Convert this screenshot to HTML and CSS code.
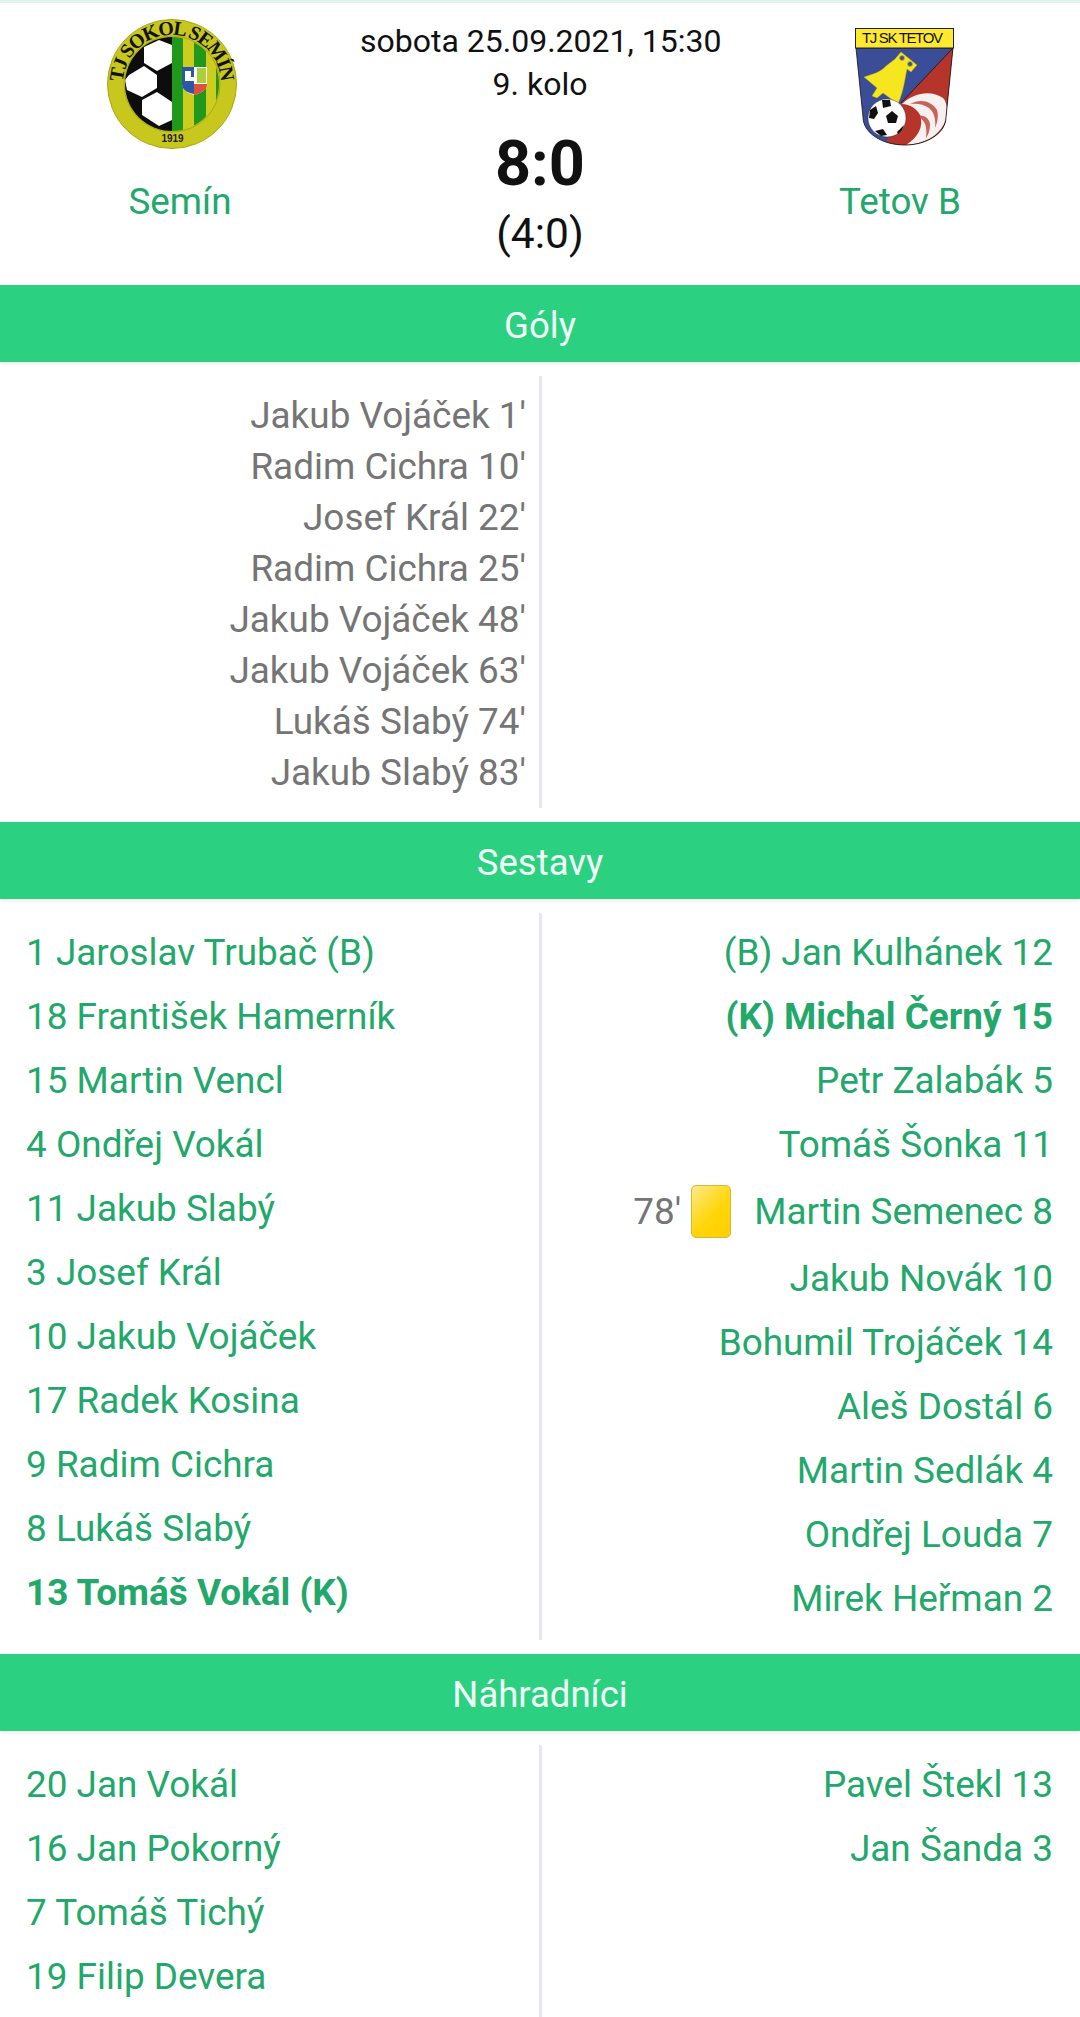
FILE: index.html
```html
<!DOCTYPE html>
<html lang="cs">
<head>
<meta charset="utf-8">
<title>Semín - Tetov B</title>
<link rel="stylesheet" href="styles.css">
</head>
<body>
<div class="page">
  <header class="match">
    <div class="team">
      <div class="crest-wrap">
      <svg class="crest crest-home" viewBox="0 0 132 132" width="132" height="132">
        <defs><clipPath id="inner"><circle cx="65" cy="66" r="47"/></clipPath></defs>
        <circle cx="65" cy="66" r="64.500" fill="#c8c71d" stroke="#a9a818" stroke-width="1"/>
        <circle cx="65" cy="66" r="48" fill="none" stroke="#a9a818" stroke-width="1"/>
        <g clip-path="url(#inner)">
          <rect x="15" y="17" width="50" height="98" fill="#0d0d0d"/>
          <rect x="65" y="17" width="11" height="98" fill="#1f981b"/>
          <rect x="76" y="17" width="11" height="98" fill="#cdcd20"/>
          <rect x="87" y="17" width="12" height="98" fill="#1f981b"/>
          <rect x="99" y="17" width="10" height="98" fill="#cdcd20"/>
          <rect x="109" y="17" width="5" height="98" fill="#1f981b"/>
          <polygon points="37,29 52,22 65,27 65,45 50,53 37,45" fill="#fff"/>
          <polygon points="22,57 37,48 50,57 50,70 35,79 20,72 18,62" fill="#fff"/>
          <polygon points="35,82 50,74 65,84 65,102 52,108 35,97" fill="#fff"/>
        </g>
        <path d="M75 49h25v16c0 7-6 10-12.500 12C81 75 75 72 75 65z" fill="#fff"/>
        <path d="M75 49h12v10h-4v4h4v4H75z" fill="#2b57a8"/>
        <path d="M78 53h6v10h-6z" fill="#fff"/>
        <path d="M90 50h9v15h-9z" fill="#a9cf3a"/>
        <path d="M75 66h12v10c-6-1-12-4-12-10z" fill="#2b57a8"/>
        <path d="M87 66h13c0 6-6 9-12 11h-1z" fill="#e0503c"/>
        <path id="sokolArc" d="M17.800 79A49 49 0 1 1 112.200 79" fill="none"/>
        <text class="crest-text"><textPath href="#sokolArc" startOffset="50%" text-anchor="middle" textLength="150">TJ SOKOL SEMÍN</textPath></text>
        <text class="crest-year" x="65.500" y="124" text-anchor="middle">1919</text>
      </svg>
      </div>
      <div class="team-name">Semín</div>
    </div>
    <div class="score">
      <div class="date">sobota 25.09.2021, 15:30</div>
      <div class="round">9. kolo</div>
      <div class="result">8:0</div>
      <div class="half">(4:0)</div>
    </div>
    <div class="team">
      <div class="crest-wrap">
      <svg class="crest crest-away" viewBox="0 0 100 118" width="100" height="118">
        <defs><clipPath id="shield"><path d="M1 20h97L91 89c0 16-19 28-41 28-23 0-42-12-42-28z"/></clipPath></defs>
        <g clip-path="url(#shield)">
          <rect width="100" height="118" fill="#3a4d96"/>
          <path d="M98 20 46 75 30 118h70V20z" fill="#b5352a"/>
          <path d="M47 76c12-12 30-14 41-6 5 4 5 18 1 26-6 12-20 20-38 21 12-8 18-18 14-30-3-6-10-11-18-11z" fill="#f6f0ef"/>
          <path d="M55 76c10-6 22-3 27 6 2 6 0 14-2 18 1-9-1-16-6-20-5-4-13-5-19-4zM62 88c7-2 12 2 13 8 0 5-1 10-4 14 1-8 0-13-2-16-2-3-4-5-7-6z" fill="#b5352a" opacity=".75"/>
        </g>
        <path d="M1 20h97L91 89c0 16-19 28-41 28-23 0-42-12-42-28z" fill="none" stroke="#111" stroke-width=".8"/>
        <path d="M98 20 46 75" stroke="#111" stroke-width=".8"/>
        <rect x=".5" y=".5" width="98" height="19.500" fill="#ffe92e" stroke="#222"/>
        <text class="away-text" x="47.500" y="15" text-anchor="middle" textLength="81">TJ SK TETOV</text>
        <path d="M40 31 46 24 62 37 56 44 52 41C50 50 49 62 43 76L28 65 22 70 17 68 22 60 9 49C18 46 26 44 31 38z" fill="#f5e61f" stroke="#b8a916" stroke-width=".4"/>
        <circle cx="47" cy="30" r="2.500" fill="#3a4d96" stroke="#c9b91a" stroke-width=".8"/>
        <circle cx="55" cy="36" r="2.500" fill="#3a4d96" stroke="#c9b91a" stroke-width=".8"/>
        <circle cx="32" cy="90" r="19" fill="#fff" stroke="#222" stroke-width=".4"/>
        <polygon points="37,83 43,88 41,95 33,95 31,88" fill="#111"/>
        <path d="M14 90l1-8 6-4 2 7-4 6zM27 72l8 0 1 6-8 2zM20 103l8-2 4 6-6 1zM42 104l6-6 1-1c-1 4-3 7-6 9z" fill="#111"/>
      </svg>
      </div>
      <div class="team-name">Tetov B</div>
    </div>
  </header>

  <h2 class="bar">Góly</h2>
  <section class="split goals">
    <div class="col left-goals">
      <div>Jakub Vojáček 1'</div>
      <div>Radim Cichra 10'</div>
      <div>Josef Král 22'</div>
      <div>Radim Cichra 25'</div>
      <div>Jakub Vojáček 48'</div>
      <div>Jakub Vojáček 63'</div>
      <div>Lukáš Slabý 74'</div>
      <div>Jakub Slabý 83'</div>
    </div>
    <div class="col"></div>
  </section>

  <h2 class="bar">Sestavy</h2>
  <section class="split players">
    <div class="col">
      <div class="row">1 Jaroslav Trubač (B)</div>
      <div class="row">18 František Hamerník</div>
      <div class="row">15 Martin Vencl</div>
      <div class="row">4 Ondřej Vokál</div>
      <div class="row">11 Jakub Slabý</div>
      <div class="row">3 Josef Král</div>
      <div class="row">10 Jakub Vojáček</div>
      <div class="row">17 Radek Kosina</div>
      <div class="row">9 Radim Cichra</div>
      <div class="row">8 Lukáš Slabý</div>
      <div class="row captain">13 Tomáš Vokál (K)</div>
    </div>
    <div class="col away">
      <div class="row">(B) Jan Kulhánek 12</div>
      <div class="row captain">(K) Michal Černý 15</div>
      <div class="row">Petr Zalabák 5</div>
      <div class="row">Tomáš Šonka 11</div>
      <div class="row row-card"><span class="minute">78'</span><span class="card"></span><span>Martin Semenec 8</span></div>
      <div class="row">Jakub Novák 10</div>
      <div class="row">Bohumil Trojáček 14</div>
      <div class="row">Aleš Dostál 6</div>
      <div class="row">Martin Sedlák 4</div>
      <div class="row">Ondřej Louda 7</div>
      <div class="row">Mirek Heřman 2</div>
    </div>
  </section>

  <h2 class="bar">Náhradníci</h2>
  <section class="split subs">
    <div class="col">
      <div class="row">20 Jan Vokál</div>
      <div class="row">16 Jan Pokorný</div>
      <div class="row">7 Tomáš Tichý</div>
      <div class="row">19 Filip Devera</div>
    </div>
    <div class="col away">
      <div class="row">Pavel Štekl 13</div>
      <div class="row">Jan Šanda 3</div>
    </div>
  </section>
</div>
</body>
</html>
```
FILE: styles.css
```css
* { box-sizing: border-box; }
html, body { margin: 0; padding: 0; background: #fff; }
body { font-family: Roboto, "Liberation Sans", sans-serif; overflow: hidden; height: 2017px; }
.page { width: 1080px; border-top: 3px solid #dff5ec; }

.match { display: grid; grid-template-columns: 360px 360px 360px; height: 282px; }
.team { display: flex; flex-direction: column; align-items: center; }
.crest-wrap { height: 177px; width: 100%; display: flex; justify-content: center; align-items: flex-start; }
.crest { display: block; flex: none; overflow: visible; }
.crest-home { margin-top: 15px; margin-right: 14px; }
.crest-away { margin-top: 25px; margin-left: 10px; }
.team-name { color: #22a86a; font-size: 36.800px; line-height: 44px; }
.crest-text { font: bold 20px "Liberation Serif", serif; fill: #111; }
.crest-year { font: bold 10px "Liberation Sans", sans-serif; fill: #222; }
.away-text { font: 15px "Liberation Sans", sans-serif; fill: #111; }

.score { text-align: center; color: #111; padding-top: 17px; white-space: nowrap; }
.date, .round { font-size: 32px; line-height: 43px; }
.result { font-size: 63px; font-weight: 700; line-height: 70px; margin-top: 23px; }
.half { font-size: 42.500px; line-height: 56px; margin-top: 7px; }

.bar { margin: 0; height: 77px; background: #2bd180; color: #f2fff8; font-size: 36.500px; font-weight: 400; line-height: 82px; text-align: center; box-shadow: 0 2px 4px rgba(0, 0, 0, .08); }

.split { display: grid; grid-template-columns: 539px 541px; margin: 14px 0; }
.col { padding: 0 27px; }
.col:first-child { padding-left: 26px; padding-right: 13px; }
.col + .col { border-left: 3px solid #e6e6f0; }

.goals .left-goals { text-align: right; color: #757575; font-size: 36.900px; line-height: 51px; padding-top: 14px; height: 432px; }

.row { display: flex; align-items: center; height: 64px; color: #22a86a; font-size: 36.900px; white-space: nowrap; }
.row-card { height: 70px; }
.away .row { justify-content: flex-end; }
.players { height: 727px; }
.players .col, .subs .col { padding-top: 7px; }
.subs { height: 273px; margin-bottom: 0; }
.captain { font-weight: 700; }
.minute { color: #757575; margin-right: 10px; }
.card { width: 40px; height: 53px; margin-right: 23px; border-radius: 5px; border: 1px solid #d8b63a; background: linear-gradient(135deg, #ffe98a 0%, #ffd60a 55%, #ffcf00 100%); }
```
